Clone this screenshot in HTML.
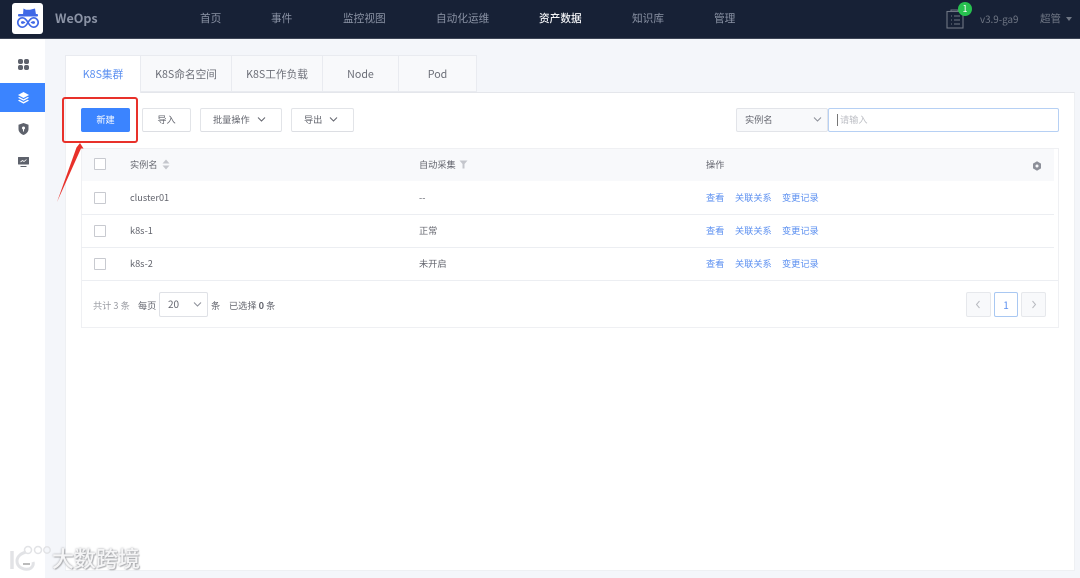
<!DOCTYPE html>
<html lang="zh">
<head>
<meta charset="utf-8">
<style>
html,body{margin:0;padding:0;width:1080px;height:578px;overflow:hidden;background:#f4f6fa}
body{position:relative;font-family:"Noto Sans CJK SC","Liberation Sans",sans-serif;font-size:9.2px;color:#63656e}
div,span,svg{position:absolute;box-sizing:border-box}
#w{left:0;top:0;width:1080px;height:578px;filter:blur(0.35px);background:#f4f6fa;overflow:hidden}
.t{white-space:nowrap;line-height:14px}
.nav{top:11px;font-size:10.67px;color:#8b93a5;white-space:nowrap;line-height:16px}
.tab{top:55px;height:37px;background:#f8f9fb;border:1px solid #e9ebf0;border-left:0;text-align:center;line-height:37px;font-size:10.67px;color:#6c6f78;white-space:nowrap}
.btn{top:108px;height:24px;background:#fff;border:1px solid #e2e4e8;border-bottom-color:#dcdee3;border-radius:2px;line-height:21px;color:#63656e;font-size:9.2px;white-space:nowrap}
.line{left:81px;width:973px;height:1px;background:#eceef2}
.cb{left:94px;width:12px;height:12px;border:1px solid #c8cad0;border-radius:1px;background:#fff}
.lnk{color:#5b8ff0;white-space:nowrap;line-height:14px;font-size:9.2px}
</style>
</head>
<body>
<div id="w">
<!-- header -->
<div style="left:0;top:0;width:1080px;height:39px;background:#172136;border-bottom:1px solid #3d4556"></div>
<div style="left:12px;top:3px;width:31px;height:31px;background:#fff;border-radius:3px"></div>
<svg style="left:16px;top:7px" width="23" height="23" viewBox="0 0 23 23">
<path d="M7 7.500 L7.500 1.500 L10 2.800 L14 2.800 L19 1.500 L20 7.500Z" fill="#3f68e6"/>
<rect x="2" y="7" width="20" height="2.500" rx="1" fill="#3f68e6"/>
<path d="M12 15.500C10 12 8 10.800 6.500 10.800A4.700 4.700 0 0 0 6.500 20.200C8 20.200 10 19 12 15.500C14 12 16 10.800 17.500 10.800A4.700 4.700 0 0 1 17.500 20.200C16 20.200 14 19 12 15.500Z" fill="none" stroke="#3f68e6" stroke-width="1.700"/>
<path d="M5 15.500C5 14 7 13.500 9.500 15.500C7 17.500 5 17 5 15.500ZM19 15.500C19 14 17 13.500 14.500 15.500C17 17.500 19 17 19 15.500Z" fill="#3f68e6"/>
</svg>
<div class="t" style="left:55px;top:9px;font-size:12.500px;font-weight:bold;color:#8b93a5;line-height:18px">WeOps</div>
<div class="nav" style="left:200px">首页</div>
<div class="nav" style="left:271px">事件</div>
<div class="nav" style="left:343px">监控视图</div>
<div class="nav" style="left:436px">自动化运维</div>
<div class="nav" style="left:539px;color:#f2f3f6;font-weight:500">资产数据</div>
<div class="nav" style="left:632px">知识库</div>
<div class="nav" style="left:714px">管理</div>
<svg style="left:946px;top:9px" width="20" height="20" viewBox="0 0 20 20" fill="none" stroke="#6f7684" stroke-width="1.100">
<rect x="1" y="2.500" width="16" height="16.500"/>
<path d="M5 2.500V1H12V2.500M5 7H6M8 7H14M5 11H6M8 11H14M5 15H6M8 15H14"/>
</svg>
<div style="left:958px;top:2px;width:14px;height:14px;border-radius:50%;background:#27c14f;color:#fff;font-size:9px;line-height:14px;text-align:center">1</div>
<div class="t" style="left:980px;top:12px;font-size:9.800px;color:#6f7684">v3.9-ga9</div>
<div class="t" style="left:1040px;top:12px;font-size:10.500px;color:#6f7684">超管</div>
<div style="left:1066px;top:17px;width:0;height:0;border:3.500px solid transparent;border-top:4px solid #6f7684;border-bottom:0"></div>

<!-- sidebar -->
<div style="left:0;top:39px;width:45px;height:539px;background:#fff"></div>
<div style="left:0;top:83px;width:45px;height:29px;background:#3b84ff"></div>
<svg style="left:18px;top:59px" width="11" height="11" viewBox="0 0 11 11" fill="#5e626c">
<rect x="0" y="0" width="5" height="5" rx="2"/><rect x="6" y="0" width="5" height="5" rx="2"/><rect x="0" y="6" width="5" height="5" rx="2"/><rect x="6" y="6" width="5" height="5" rx="2"/>
</svg>
<svg style="left:18px;top:92px" width="11" height="12" viewBox="0 0 11 12" fill="#fff">
<path d="M5.500 0L11 3L5.500 6L0 3Z"/>
<path d="M1.300 5L5.500 7.300L9.700 5L11 5.800L5.500 8.800L0 5.800Z"/>
<path d="M1.300 7.800L5.500 10L9.700 7.800L11 8.600L5.500 11.600L0 8.600Z"/>
</svg>
<svg style="left:18px;top:123px" width="11" height="12" viewBox="0 0 11 12">
<path d="M5.500 0L10.500 1.800V6C10.500 9 8 11 5.500 12C3 11 0.500 9 0.500 6V1.800Z" fill="#5e626c"/>
<circle cx="5.500" cy="5" r="1.500" fill="#fff"/><rect x="5" y="5.500" width="1" height="3" fill="#fff"/>
</svg>
<svg style="left:18px;top:157px" width="11" height="11" viewBox="0 0 11 11">
<rect x="0" y="0" width="11" height="7.500" rx="0.500" fill="#5e626c"/>
<path d="M2.500 5L4.500 3.500L6 4.500L8.500 2.500" stroke="#fff" stroke-width="0.800" fill="none"/>
<rect x="2.500" y="9" width="6" height="1" fill="#5e626c"/>
</svg>

<!-- card and tabs -->
<div style="left:65px;top:92px;width:1010px;height:479px;background:#fff;border:1px solid #eef0f3;border-top-color:#e4e6eb"></div>
<div class="tab" style="left:65px;width:76px;height:38px;background:#fff;color:#5b8ff0;border-left:1px solid #e9ebf0;border-bottom:0">K8S集群</div>
<div class="tab" style="left:141px;width:91px">K8S命名空间</div>
<div class="tab" style="left:232px;width:91px">K8S工作负载</div>
<div class="tab" style="left:323px;width:76px">Node</div>
<div class="tab" style="left:399px;width:78px">Pod</div>

<!-- toolbar -->
<div class="btn" style="left:81px;width:49px;background:#3b84ff;border-color:#3b84ff;color:#fff;text-align:center">新建</div>
<div class="btn" style="left:142px;width:49px;text-align:center">导入</div>
<div class="btn" style="left:200px;width:82px;padding-left:12px">批量操作</div>
<svg style="left:257px;top:116px" width="9" height="7" viewBox="0 0 9 7" fill="none" stroke="#63656e"><path d="M1 1.500L4.500 5L8 1.500"/></svg>
<div class="btn" style="left:291px;width:63px;padding-left:12px">导出</div>
<svg style="left:329px;top:116px" width="9" height="7" viewBox="0 0 9 7" fill="none" stroke="#63656e"><path d="M1 1.500L4.500 5L8 1.500"/></svg>
<div class="btn" style="left:736px;width:92px;background:#f8f9fb;border-color:#e2e4e9;padding-left:8px">实例名</div>
<svg style="left:813px;top:116px" width="9" height="7" viewBox="0 0 9 7" fill="none" stroke="#8d9099"><path d="M1 1.500L4.500 5L8 1.500"/></svg>
<div class="btn" style="left:828px;width:230.500px;border-color:#b6d0f4;color:#bcbec4;padding-left:11px">请输入</div>
<div style="left:837px;top:114px;width:1px;height:12px;background:#777"></div>

<!-- table -->
<div style="left:81px;top:148px;width:978px;height:180px;background:#fff;border:1px solid #eff0f3"></div>
<div style="left:82px;top:149px;width:972px;height:32px;background:#f8f9fb"></div>
<div class="cb" style="top:158px"></div>
<div class="t" style="left:130px;top:157px">实例名</div>
<svg style="left:162px;top:159px" width="8" height="11" viewBox="0 0 8 11" fill="#c4c6cc"><path d="M4 0.500L7.500 4.500H0.500Z"/><path d="M4 10.500L7.500 6.500H0.500Z"/></svg>
<div class="t" style="left:419px;top:157px">自动采集</div>
<svg style="left:459px;top:160px" width="9" height="9" viewBox="0 0 9 9" fill="#c4c6cc"><path d="M0.500 0.500H8.500L5.500 4V8.500H3.500V4Z"/></svg>
<div class="t" style="left:706px;top:157px">操作</div>
<svg style="left:1032px;top:161px" width="10" height="10" viewBox="0 0 10 10"><path d="M5 0.300L9 2.600V7.400L5 9.700L1 7.400V2.600Z" fill="#8d9099"/><circle cx="5" cy="5" r="1.500" fill="#f8f9fb"/></svg>

<div class="line" style="top:214px"></div>
<div class="line" style="top:247px"></div>
<div style="left:82px;top:280px;width:976px;height:1px;background:#eceef2"></div>

<div class="cb" style="top:191.500px"></div>
<div class="t" style="left:130px;top:190px">cluster01</div>
<div class="t" style="left:419px;top:190px">--</div>
<div class="lnk" style="left:706px;top:190px">查看</div>
<div class="lnk" style="left:735px;top:190px">关联关系</div>
<div class="lnk" style="left:782px;top:190px">变更记录</div>

<div class="cb" style="top:224.500px"></div>
<div class="t" style="left:130px;top:223px">k8s-1</div>
<div class="t" style="left:419px;top:223px">正常</div>
<div class="lnk" style="left:706px;top:223px">查看</div>
<div class="lnk" style="left:735px;top:223px">关联关系</div>
<div class="lnk" style="left:782px;top:223px">变更记录</div>

<div class="cb" style="top:257.500px"></div>
<div class="t" style="left:130px;top:256px">k8s-2</div>
<div class="t" style="left:419px;top:256px">未开启</div>
<div class="lnk" style="left:706px;top:256px">查看</div>
<div class="lnk" style="left:735px;top:256px">关联关系</div>
<div class="lnk" style="left:782px;top:256px">变更记录</div>

<!-- footer -->
<div class="t" style="left:93px;top:298px;color:#9a9ca3">共计 3 条</div>
<div class="t" style="left:138px;top:298px">每页</div>
<div style="left:159px;top:292px;width:49px;height:25px;border:1px solid #dfe1e6;border-radius:2px;background:#fff"></div>
<div class="t" style="left:168px;top:297px;font-size:10px">20</div>
<svg style="left:193px;top:301px" width="9" height="7" viewBox="0 0 9 7" fill="none" stroke="#8d9099"><path d="M1 1.500L4.500 5L8 1.500"/></svg>
<div class="t" style="left:211px;top:298px">条</div>
<div class="t" style="left:229px;top:298px">已选择 <b>0</b> 条</div>
<div style="left:966px;top:292px;width:25px;height:25px;border:1px solid #e6e8ec;border-radius:2px;background:#f8f9fb"></div>
<svg style="left:975px;top:300px" width="6" height="9" viewBox="0 0 6 9" fill="none" stroke="#b8bac0"><path d="M4.500 1L1.500 4.500L4.500 8"/></svg>
<div style="left:994px;top:292px;width:24px;height:25px;border:1px solid #a9c8f2;border-radius:2px;background:#fff;text-align:center;line-height:23px;color:#5b8ff0;font-size:10px">1</div>
<div style="left:1021px;top:292px;width:25px;height:25px;border:1px solid #e6e8ec;border-radius:2px;background:#f8f9fb"></div>
<svg style="left:1031px;top:300px" width="6" height="9" viewBox="0 0 6 9" fill="none" stroke="#b8bac0"><path d="M1.500 1L4.500 4.500L1.500 8"/></svg>

<!-- red annotation -->
<div style="left:62px;top:97px;width:75.500px;height:46px;border:2.500px solid #e8312a;border-radius:3px"></div>
<svg style="left:50px;top:140px" width="40" height="66" viewBox="0 0 40 66"><path d="M30 3L33.500 8.500L31 8.500L7 62L26.500 7.500Z" fill="#e8312a"/></svg>

<!-- watermark -->
<svg style="left:8px;top:544px" width="44" height="28" viewBox="0 0 44 28" fill="none" stroke="#e2e3e6">
<path d="M4 7V25" stroke-width="3.500"/>
<path d="M18 8C11 10 9 14 9 17C9 23 15 26 21 25C24 24 26 21 25 18" stroke-width="3"/>
<circle cx="20" cy="6" r="3.500" stroke-width="1.500"/><circle cx="30" cy="6" r="3.500" stroke-width="1.500"/><circle cx="39" cy="6" r="3.200" stroke-width="1.500"/>
<path d="M15 20H22" stroke="#555" stroke-width="0.800"/>
</svg>
<div class="t" style="left:52px;top:544px;font-size:22px;line-height:28px;color:#f5f5f6;letter-spacing:0;text-shadow:0 0 2px #9a9ca0,1px 1px 1px #b8b9bc;font-weight:500">大数跨境</div>
</div>
</body>
</html>
